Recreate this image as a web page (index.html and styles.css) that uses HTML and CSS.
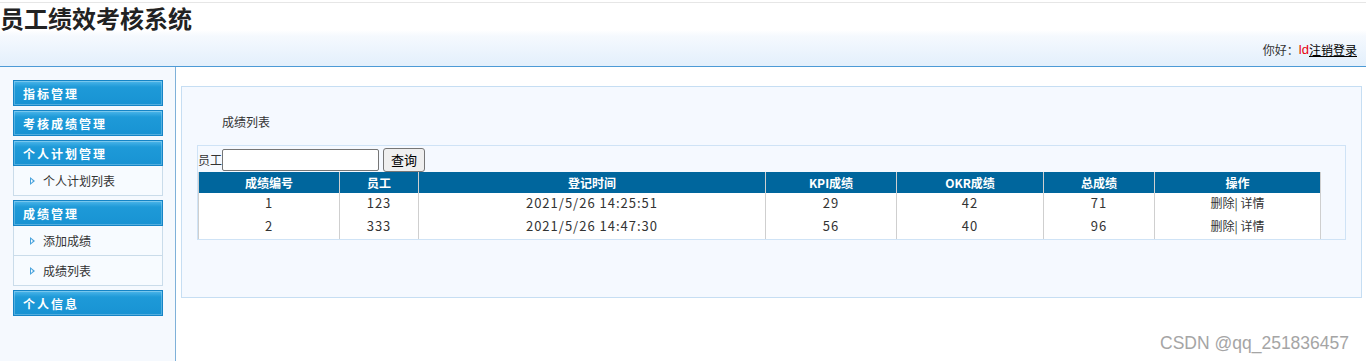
FILE: index.html
```html
<!DOCTYPE html>
<html lang="zh">
<head>
<meta charset="utf-8">
<title>员工绩效考核系统</title>
<link rel="stylesheet" href="styles.css">
</head>
<body>
<div class="header">
  <div class="topline"></div>
  <h1 class="title">员工绩效考核系统</h1>
  <div class="userbar">你好：<span class="uname">ld</span><a class="logout" href="#">注销登录</a></div>
</div>
<div class="layout">
  <div class="sidebar">
    <div class="menu">
      <div class="menu-head">指标管理</div>
    </div>
    <div class="menu">
      <div class="menu-head">考核成绩管理</div>
    </div>
    <div class="menu">
      <div class="menu-head">个人计划管理</div>
      <div class="menu-item"><span class="arrow"></span>个人计划列表</div>
    </div>
    <div class="menu">
      <div class="menu-head">成绩管理</div>
      <div class="menu-item"><span class="arrow"></span>添加成绩</div>
      <div class="menu-item"><span class="arrow"></span>成绩列表</div>
    </div>
    <div class="menu">
      <div class="menu-head">个人信息</div>
    </div>
  </div>
  <div class="main">
    <div class="panel">
      <div class="panel-title">成绩列表</div>
      <div class="inner">
        <div class="search"><span>员工</span><input class="search-input" type="text"><button class="search-btn">查询</button></div>
        <table class="grid">
          <colgroup>
            <col style="width:141px"><col style="width:79px"><col style="width:347px"><col style="width:131px"><col style="width:147px"><col style="width:111px"><col style="width:166px">
          </colgroup>
          <thead>
            <tr><th>成绩编号</th><th>员工</th><th>登记时间</th><th>KPI成绩</th><th>OKR成绩</th><th>总成绩</th><th>操作</th></tr>
          </thead>
          <tbody>
            <tr><td>1</td><td>123</td><td>2021/5/26 14:25:51</td><td>29</td><td>42</td><td>71</td><td class="ops">删除| 详情</td></tr>
            <tr><td>2</td><td>333</td><td>2021/5/26 14:47:30</td><td>56</td><td>40</td><td>96</td><td class="ops">删除| 详情</td></tr>
          </tbody>
        </table>
      </div>
    </div>
  </div>
</div>
<div class="watermark">CSDN @qq_251836457</div>
</body>
</html>
```
FILE: styles.css
```css
* { box-sizing: border-box; }
html, body { margin: 0; padding: 0; }
body {
  width: 1366px;
  height: 361px;
  overflow: hidden;
  font-family: "Noto Sans CJK SC", "Liberation Sans", sans-serif;
  font-size: 12px;
  color: #333;
  background: #fff;
  position: relative;
}
.header {
  height: 67px;
  background: linear-gradient(to bottom, #ffffff 0px, #ffffff 30px, #f5f9fe 36px, #e4f0fc 64px);
  border-bottom: 1px solid #4c9ad6;
  position: relative;
}
.topline { height: 3px; border-bottom: 1px solid #e6e6e6; }
.title {
  margin: 0;
  padding: 0;
  font-size: 24px;
  font-weight: bold;
  line-height: 30px;
  height: 30px;
  color: #222;
}
.userbar {
  display: flex;
  justify-content: flex-end;
  padding-right: 9px;
  padding-top: 9px;
  line-height: 16px;
  font-size: 12px;
  color: #333;
}
.uname { color: #e8000a; font-family: "Liberation Sans", sans-serif; font-size: 13px; }
.logout { color: #000; text-decoration: underline; }
.layout { display: flex; height: 294px; }
.sidebar {
  width: 176px;
  flex: none;
  background: #f5f9fe;
  border-right: 1px solid #7fb1d9;
  padding: 13px 0 0 13px;
}
.menu { width: 150px; margin-bottom: 4px; }
.menu-head {
  height: 26px;
  border: 1px solid #1584c6;
  background: linear-gradient(to bottom, #4db6ea 0px, #1e9ad8 6px, #1893d3 100%);
  box-shadow: inset 0 0 0 1px rgba(255,255,255,0.25);
  color: #fff;
  font-weight: bold;
  font-size: 12px;
  letter-spacing: 2px;
  line-height: 25px;
  padding-left: 9px;
}
.menu-item {
  height: 30px;
  background: #f7fbff;
  border: 1px solid #cadcea;
  border-top: none;
  padding-left: 16px;
  font-size: 12px;
  color: #333;
  display: flex;
  align-items: center;
}
.arrow {
  width: 0; height: 0;
  border-left: 5px solid #4aa3dc;
  border-top: 4px solid transparent;
  border-bottom: 4px solid transparent;
  margin-right: 8px;
  position: relative;
}
.arrow::after {
  content: "";
  position: absolute;
  left: -4px; top: -2px;
  border-left: 2px solid #f7fbff;
  border-top: 2px solid transparent;
  border-bottom: 2px solid transparent;
}
.main { flex: 1; padding: 19px 5px 0 5px; }
.panel {
  height: 212px;
  border: 1px solid #c6def3;
  background: #f5f9ff;
  padding: 27px 15px 0 15px;
}
.panel-title {
  font-size: 12px;
  color: #333;
  line-height: 16px;
  padding-left: 25px;
  height: 31px;
}
.inner {
  border: 1px solid #cfe3f6;
  width: 1149px;
  height: 95px;
  padding: 1px 0 0 0;
}
.search {
  display: flex;
  align-items: center;
  height: 25px;
  font-size: 12px;
  color: #333;
}
.search-input {
  width: 157px;
  height: 22px;
  border: 1px solid #767676;
  border-radius: 2px;
  margin: 0 4px 0 0;
  padding: 0;
  background: #fff;
}
.search-btn {
  height: 24px;
  width: 42px;
  padding: 0;
  font-size: 13px;
  font-family: "Noto Sans CJK SC", sans-serif;
  border: 1px solid #767676;
  border-radius: 3px;
  background: #efefef;
  color: #000;
}
.grid {
  border-collapse: collapse;
  table-layout: fixed;
  width: 1122px;
  background: #fff;
}
.grid th {
  background: #00669d;
  color: #fff;
  font-weight: bold;
  font-size: 12px;
  height: 21px;
  padding: 0;
  border-left: 1px solid #cfcfcf;
  border-right: 1px solid #cfcfcf;
  line-height: 20px;
}
.grid td {
  height: 23px;
  padding: 0 0 3px 0;
  text-align: center;
  font-size: 13px;
  letter-spacing: 1px;
  color: #333;
  border-left: 1px solid #cfcfcf;
  border-right: 1px solid #cfcfcf;
  line-height: 20px;
}
.grid td.ops { font-size: 12px; letter-spacing: 0; }
.watermark {
  position: absolute;
  left: 1160px;
  top: 333px;
  font-family: "Liberation Sans", sans-serif;
  font-size: 17.5px;
  color: #a5a5a5;
  line-height: 20px;
}
```
